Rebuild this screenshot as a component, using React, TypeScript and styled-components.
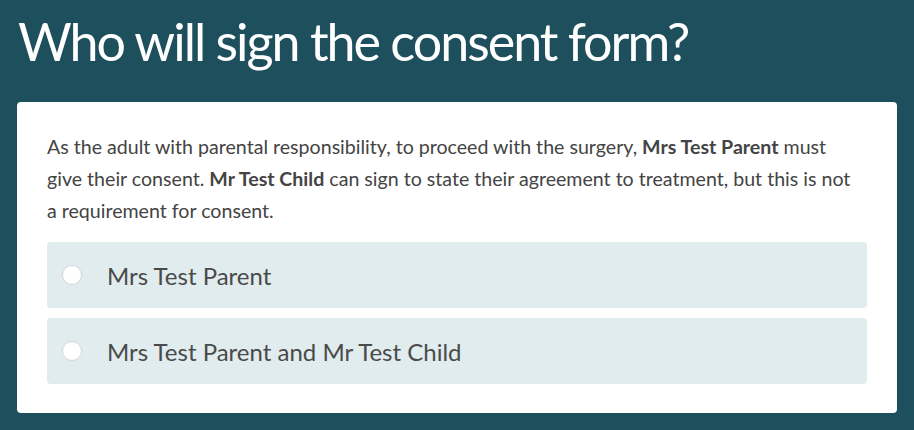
import styled, { createGlobalStyle } from 'styled-components';

const GlobalStyle = createGlobalStyle`
	html, body {
		margin: 0;
		padding: 0;
		background: #1d4f5c;
	}
	body {
		font-family: 'Lato', 'Open Sans', sans-serif;
	}
`;

const options = ['Mrs Test Parent', 'Mrs Test Parent and Mr Test Child'];

export default function App() {
	return (
		<>
			<GlobalStyle />
			<Page>
				<Title>Who will sign the consent form?</Title>
				<Card>
					<Intro>
						As the adult with parental responsibility, to proceed with the surgery,{' '}
						<strong>Mrs Test Parent</strong> must give their consent.{' '}
						<strong>Mr Test Child</strong> can sign to state their agreement to
						treatment, but this is not a requirement for consent.
					</Intro>
					<OptionList>
						{options.map(label => (
							<Option key={label}>
								<Radio type="radio" name="signer" value={label} />
								<OptionText>{label}</OptionText>
							</Option>
						))}
					</OptionList>
				</Card>
			</Page>
		</>
	);
}

const Page = styled.div`
	padding: 0 17px 17px;
	min-height: 430px;
	box-sizing: border-box;
`;

const Title = styled.h1`
	margin: 0;
	padding: 10px 0 0 1px;
	height: 102px;
	box-sizing: border-box;
	font-size: 52px;
	font-weight: 400;
	line-height: 62px;
	color: #fff;
	letter-spacing: -2px;
`;

const Card = styled.div`
	background: #fff;
	border-radius: 4px;
	padding: 29px 30px 29px;
	box-sizing: border-box;
`;

const Intro = styled.p`
	margin: 0 0 15px;
	max-width: 805px;
	font-size: 19.6px;
	line-height: 32px;
	color: #444;

	strong {
		font-weight: 700;
	}
`;

const OptionList = styled.div`
	display: flex;
	flex-direction: column;
	gap: 10px;
`;

const Option = styled.label`
	display: flex;
	align-items: center;
	height: 66px;
	padding: 0 15px;
	background: #e0ecee;
	border-radius: 4px;
	cursor: pointer;
`;

const Radio = styled.input`
	appearance: none;
	margin: 0;
	width: 20px;
	height: 20px;
	border-radius: 50%;
	background: #fff;
	border: 1px solid #d6d6d6;
	box-sizing: border-box;
	flex-shrink: 0;
`;

const OptionText = styled.span`
	margin-left: 25px;
	font-size: 24px;
	color: #4a4a4a;
`;
